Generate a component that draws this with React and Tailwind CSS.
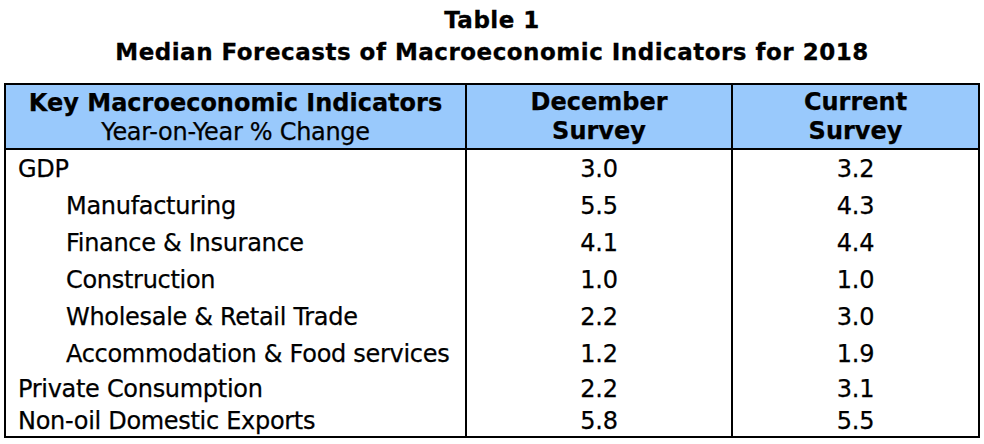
const ROWS = [
  { label: "GDP", dec: "3.0", cur: "3.2", sub: false, h: "h-[37px]" },
  { label: "Manufacturing", dec: "5.5", cur: "4.3", sub: true, h: "h-[37px]" },
  { label: "Finance & Insurance", dec: "4.1", cur: "4.4", sub: true, h: "h-[37px]" },
  { label: "Construction", dec: "1.0", cur: "1.0", sub: true, h: "h-[37px]" },
  { label: "Wholesale & Retail Trade", dec: "2.2", cur: "3.0", sub: true, h: "h-[37px]" },
  { label: "Accommodation & Food services", dec: "1.2", cur: "1.9", sub: true, h: "h-[37px]" },
  { label: "Private Consumption", dec: "2.2", cur: "3.1", sub: false, h: "h-[34px]" },
  { label: "Non-oil Domestic Exports", dec: "5.8", cur: "5.5", sub: false, h: "h-[30px]" },
];

export default function App() {
  return (
    <div className="w-[984px] h-[444px] bg-white text-black overflow-hidden font-['DejaVu_Sans',sans-serif]">
      {/* Title */}
      <div className="pt-[4px] text-center font-bold text-[23px] leading-[32px] tracking-[0.5px] [-webkit-text-stroke:0.3px_black]">
        <div>Table 1</div>
        <div>Median Forecasts of Macroeconomic Indicators for 2018</div>
      </div>

      {/* Table */}
      <div className="mt-[15px] ml-[4px] w-[976px] border-2 border-black text-[24px] leading-[28px] tracking-[-0.3px] [-webkit-text-stroke:0.25px_black]">
        <div className="flex bg-[#99c9fc] border-b-2 border-black leading-[29px]">
          <div className="w-[461px] shrink-0 border-r-2 border-black text-center pt-[4px] pb-[1px]">
            <div className="font-bold tracking-normal">Key Macroeconomic Indicators</div>
            <div>Year-on-Year % Change</div>
          </div>
          <div className="w-[266px] shrink-0 border-r-2 border-black text-center font-bold tracking-normal pt-[3px] pb-[2px]">
            <div>December</div>
            <div>Survey</div>
          </div>
          <div className="flex-1 text-center font-bold tracking-normal pt-[3px] pb-[2px]">
            <div>Current</div>
            <div>Survey</div>
          </div>
        </div>

        {ROWS.map((r) => (
          <div key={r.label} className={`flex ${r.h}`}>
            <div className={`w-[461px] shrink-0 flex items-center border-r-2 border-black whitespace-nowrap ${r.sub ? "pl-[60px]" : "pl-[12px]"}`}>
              {r.label}
            </div>
            <div className="w-[266px] shrink-0 flex items-center justify-center border-r-2 border-black">{r.dec}</div>
            <div className="flex-1 flex items-center justify-center">{r.cur}</div>
          </div>
        ))}
      </div>
    </div>
  );
}
